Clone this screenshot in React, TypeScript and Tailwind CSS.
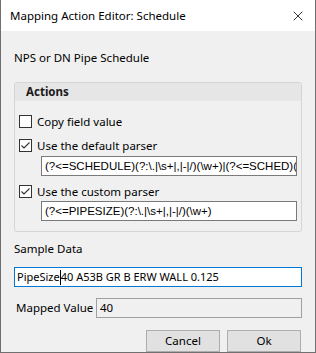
import { X } from 'lucide-react';

const font = { fontFamily: '"Noto Sans", "Liberation Sans", Arial, sans-serif' };
const regexFont = { fontFamily: '"Liberation Sans", Arial, sans-serif' };

function CheckBox({ checked }: { checked?: boolean }) {
  return (
    <div className="w-[13px] h-[13px] border border-[#333333] bg-white flex items-center justify-center">
      {checked && (
        <svg width="11" height="11" viewBox="0 0 11 11">
          <path d="M1.5 5.5 L4 8 L9.5 2.5" fill="none" stroke="#333" strokeWidth="1.1" />
        </svg>
      )}
    </div>
  );
}

function CheckRow({ label, checked }: { label: string; checked?: boolean }) {
  return (
    <div className="h-[13px] flex items-center gap-[5px] pl-[4px]">
      <CheckBox checked={checked} />
      <span className="text-[11.5px] leading-[16px] text-black">{label}</span>
    </div>
  );
}

function TextBox({ value }: { value: string }) {
  return (
    <div className="ml-[26px] mr-[4px] h-[20px] bg-white border border-[#7a7a7a] flex items-center pl-[3px] overflow-hidden whitespace-nowrap">
      <span className="text-[11.5px] leading-[16px] text-black" style={regexFont}>{value}</span>
    </div>
  );
}

export default function App() {
  return (
    <div
      className="w-[316px] h-[353px] bg-[#f0f0f0] border-x border-b border-[#707070] flex flex-col overflow-hidden"
      style={font}
    >
      <div className="h-[31px] bg-white flex items-center justify-between pl-[9px] pr-[9px] shrink-0">
        <span className="text-[11.5px] text-black">Mapping Action Editor: Schedule</span>
        <X size={16} strokeWidth={1.2} className="text-black" />
      </div>

      <div className="px-[13px] flex flex-col">
        <div className="mt-[19px] h-[16px] text-[11.5px] leading-[16px] text-black">NPS or DN Pipe Schedule</div>

        <div className="mt-[16px] h-[150px] border border-[#d5d5d5] rounded-[3px] flex flex-col">
          <div className="h-[18px] bg-[#e6e6e6] flex items-center pl-[11px] rounded-t-[3px]">
            <span className="text-[11.5px] leading-[16px] font-bold text-[#1a1a1a]">Actions</span>
          </div>
          <div className="mt-[14px] flex flex-col">
            <CheckRow label="Copy field value" />
            <div className="mt-[11px]">
              <CheckRow label="Use the default parser" checked />
            </div>
            <div className="mt-[4px]">
              <TextBox value="(?<=SCHEDULE)(?:\.|\s+|,|-|/)(\w+)|(?<=SCHED)(?:\.|\s+|,|-|/)(\w+)" />
            </div>
            <div className="mt-[9px]">
              <CheckRow label="Use the custom parser" checked />
            </div>
            <div className="mt-[3px]">
              <TextBox value="(?<=PIPESIZE)(?:\.|\s+|,|-|/)(\w+)" />
            </div>
          </div>
        </div>

        <div className="mt-[9px] h-[16px] text-[11.5px] leading-[16px] text-black">Sample Data</div>
        <div className="mt-[10px] h-[20px] bg-white border border-[#0078d7] flex items-center pl-[2px] whitespace-nowrap">
          <span className="text-[11px] leading-[16px] text-black">PipeSize</span>
          <span className="w-px h-[15px] bg-black" />
          <span className="text-[11px] leading-[16px] text-black">40 A53B GR B ERW WALL 0.125</span>
        </div>

        <div className="mt-[11px] h-[20px] flex items-center">
          <span className="w-[82px] pl-[2px] whitespace-nowrap text-[11.5px] leading-[16px] text-black">Mapped Value</span>
          <div className="flex-1 h-[20px] bg-[#f0f0f0] border border-[#a0a0a0] flex items-center pl-[3px]">
            <span className="text-[11.5px] leading-[16px] text-black">40</span>
          </div>
        </div>

        <div className="mt-[12px] flex justify-end gap-[7px] pr-px">
          <button className="w-[74px] h-[22px] bg-[#e1e1e1] border border-[#adadad] text-[11.5px] leading-[16px] text-black">Cancel</button>
          <button className="w-[74px] h-[22px] bg-[#e1e1e1] border border-[#adadad] text-[11.5px] leading-[16px] text-black">Ok</button>
        </div>
      </div>
    </div>
  );
}
